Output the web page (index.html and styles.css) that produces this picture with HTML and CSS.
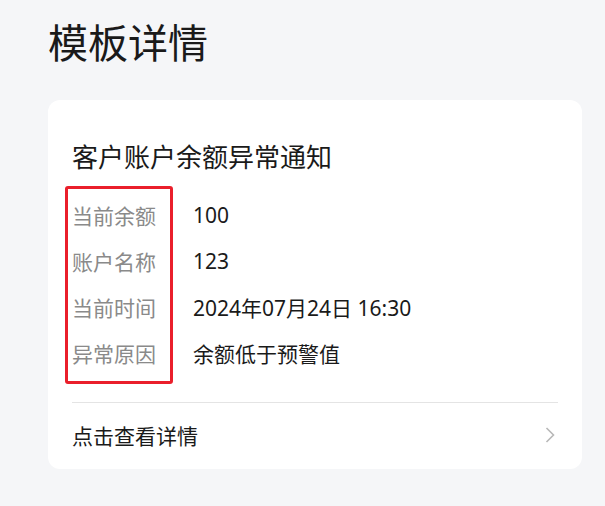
FILE: index.html
```html
<!DOCTYPE html>
<html lang="zh-CN">
<head>
<meta charset="utf-8">
<title>模板详情</title>
<link rel="stylesheet" href="styles.css">
</head>
<body>
<div class="page">
  <h1 class="page-title">模板详情</h1>
  <div class="card">
    <h2 class="card-title">客户账户余额异常通知</h2>
    <div class="rows">
      <div class="row"><span class="label">当前余额</span><span class="value">100</span></div>
      <div class="row"><span class="label">账户名称</span><span class="value">123</span></div>
      <div class="row"><span class="label">当前时间</span><span class="value">2024年07月24日 16:30</span></div>
      <div class="row"><span class="label">异常原因</span><span class="value">余额低于预警值</span></div>
      <div class="highlight"></div>
    </div>
    <div class="divider"></div>
    <div class="footer">
      <span class="footer-text">点击查看详情</span>
      <svg class="chevron" width="10" height="16" viewBox="0 0 10 16"><polyline points="1.5,1 8.5,8 1.5,15" fill="none" stroke="#b8b8b8" stroke-width="1.6"/></svg>
    </div>
  </div>
</div>
</body>
</html>
```
FILE: styles.css
```css
html, body {
  margin: 0;
  padding: 0;
  background: #f5f6f8;
}
body {
  font-family: "Noto Sans CJK SC", "Noto Sans", sans-serif;
  color: #1c1c1c;
}
.page {
  padding: 13px 23px 0 48px;
}
.page-title {
  margin: 0;
  font-size: 40px;
  font-weight: 400;
  line-height: 56px;
  color: #1a1a1a;
}
.card {
  margin-top: 31px;
  width: 534px;
  box-sizing: border-box;
  background: #fff;
  border-radius: 12px;
  padding: 38px 24px 0 24px;
}
.card-title {
  margin: 0;
  font-size: 26px;
  font-weight: 400;
  line-height: 36px;
  color: #1a1a1a;
}
.rows {
  position: relative;
  margin-top: 18px;
}
.row {
  display: flex;
  align-items: center;
  height: 46px;
  font-size: 21px;
}
.label {
  flex: 0 0 121px;
  color: #8a8a8a;
}
.value {
  font-family: "Noto Sans", "Noto Sans CJK SC", sans-serif;
  color: #1a1a1a;
}
.highlight {
  position: absolute;
  left: -7px;
  top: -6px;
  width: 108px;
  height: 198px;
  box-sizing: border-box;
  border: 3px solid #ea1f2b;
  border-radius: 3px;
}
.divider {
  margin-top: 26px;
  height: 1px;
  background: #e4e4e4;
}
.footer {
  display: flex;
  align-items: center;
  justify-content: space-between;
  height: 64px;
  padding-right: 3px;
  padding-bottom: 2px;
}
.footer-text {
  font-size: 21px;
  color: #1a1a1a;
}
.chevron {
  display: block;
}
```
